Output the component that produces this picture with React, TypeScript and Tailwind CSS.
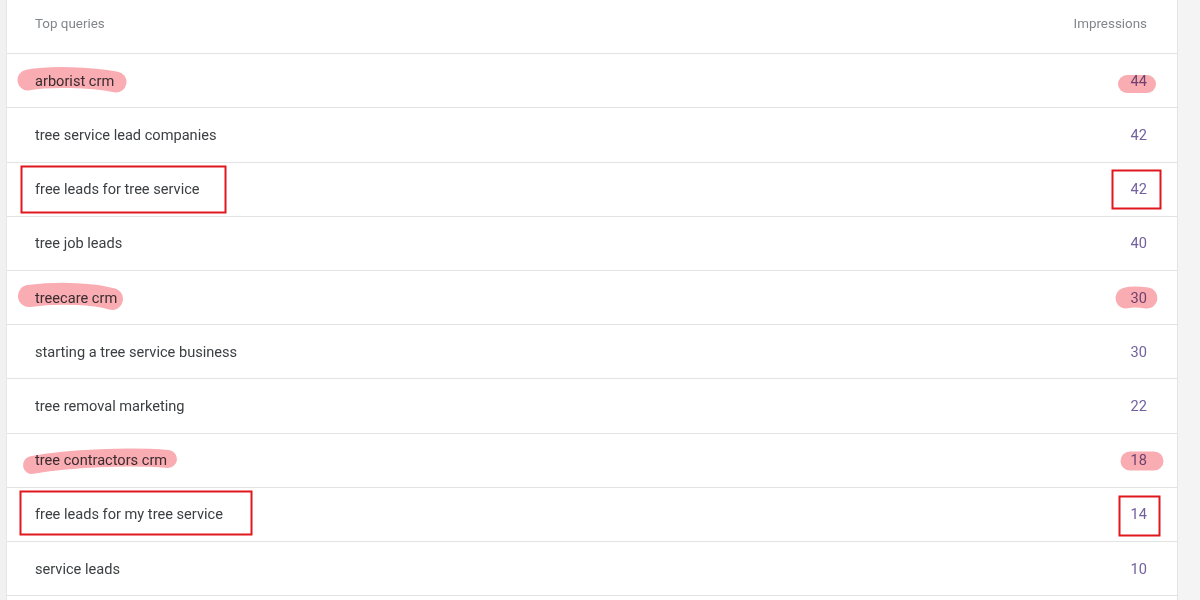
import React from 'react';

type Row = { query: string; impressions: number };

const rows: Row[] = [
  { query: 'arborist crm', impressions: 44 },
  { query: 'tree service lead companies', impressions: 42 },
  { query: 'free leads for tree service', impressions: 42 },
  { query: 'tree job leads', impressions: 40 },
  { query: 'treecare crm', impressions: 30 },
  { query: 'starting a tree service business', impressions: 30 },
  { query: 'tree removal marketing', impressions: 22 },
  { query: 'tree contractors crm', impressions: 18 },
  { query: 'free leads for my tree service', impressions: 14 },
  { query: 'service leads', impressions: 10 },
  { query: '', impressions: 0 },
];

// hand-drawn markup laid over the table
const Markup = () => (
  <svg className="pointer-events-none absolute inset-0 h-full w-full mix-blend-multiply" viewBox="0 0 1200 600">
    <g stroke="#f9adb2" strokeLinecap="round" strokeLinejoin="round" fill="none">
      <path d="M28 80 C 50 76, 90 77, 116 82" strokeWidth="21" />
      <path d="M1127 84 L 1147 84" strokeWidth="18" />
      <path d="M29 296 C 60 292, 95 294, 112 299" strokeWidth="22" />
      <path d="M1126 298 C 1133 296, 1140 297, 1147 298" strokeWidth="21" />
      <path d="M32 465 C 70 458, 130 456, 168 459" strokeWidth="18" />
      <path d="M1130 461 L 1154 461" strokeWidth="19" />
    </g>
    <g stroke="#e0181e" strokeWidth="2" fill="none">
      <rect x="21.5" y="166.5" width="204" height="46" />
      <rect x="1112.5" y="170.5" width="48" height="38" />
      <rect x="20.5" y="491.5" width="231" height="43" />
      <rect x="1119.5" y="496.5" width="40" height="39" />
    </g>
  </svg>
);

export default function App() {
  return (
    <div className="relative flex h-[600px] w-[1200px] overflow-hidden bg-[#f4f4f4] font-['Roboto',sans-serif]">
      <div className="w-[7px] border-r border-[#e6e6e6] bg-[#f1f1f1]" />
      <div className="w-[1171px] border-r border-[#e4e4e4] bg-white">
        <div className="flex h-[54.2px] items-center justify-between border-b border-[#e3e3e3] pl-[28px] pr-[30px] text-[13.4px] text-[#80868b]">
          <span className="-mt-[6px]">Top queries</span>
          <span className="-mt-[6px]">Impressions</span>
        </div>
        {rows.map((r, i) => (
          <div
            key={i}
            className="flex h-[54.2px] items-center justify-between border-b border-[#e3e3e3] pl-[28px] pr-[30px] pt-[2px] text-[14.6px]"
          >
            <span className="text-[#3c4043]">{r.query}</span>
            <span className="text-[#73609e]">{r.query ? r.impressions : ''}</span>
          </div>
        ))}
      </div>
      <div className="flex-1" />
      <Markup />
    </div>
  );
}
